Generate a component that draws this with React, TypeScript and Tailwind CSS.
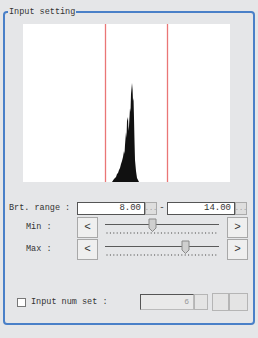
const mono = { fontFamily: '"Liberation Mono", "DejaVu Sans Mono", monospace' };

function Histogram() {
  return (
    <svg className="ml-[18px] mt-[6px] block" width="207" height="158" viewBox="23 24 207 158">
      <rect x="23" y="24" width="207" height="158" fill="#ffffff" />
      <path
        d="M112 182 L114 179 L116 177 L117 174 L118 173 L119 170 L120 168 L121 164 L122 161 L123 157 L124 151 L124.5 154 L125 145 L126 132 L126.5 138 L127 121 L128 117 L128.5 131 L129 126 L130 108 L130.5 112 L131 94 L132 83 L132.6 90 L133 101 L133.5 98 L134 118 L134.5 141 L135 160 L136 171 L137 178 L138 180 L139 182 Z"
        fill="#111111"
      />
      <line x1="105.5" y1="24" x2="105.5" y2="182" stroke="#ea7676" strokeWidth="1.3" />
      <line x1="167.5" y1="24" x2="167.5" y2="182" stroke="#ea7676" strokeWidth="1.3" />
    </svg>
  );
}

function Slider({ pos }: { pos: number }) {
  const ticks = [];
  for (let x = 2; x < 114; x += 3.4) ticks.push(x);
  return (
    <svg width="114" height="21" viewBox="0 0 114 21" className="block">
      <line x1="0" y1="7.5" x2="114" y2="7.5" stroke="#5a5a5a" strokeWidth="1" />
      {ticks.map((x, i) => (
        <line key={i} x1={x} y1="15" x2={x} y2="17" stroke="#7a7a7a" strokeWidth="0.8" />
      ))}
      <path
        d={`M${pos} 2 h7 v9 l-3.5 3.5 l-3.5 -3.5 Z`}
        fill="#cfcfcf"
        stroke="#8a8a8a"
        strokeWidth="1"
      />
    </svg>
  );
}

function ArrowButton({ children }: { children: string }) {
  return (
    <div className="w-[21px] h-[21px] flex items-center justify-center bg-[#efefef] border border-[#a8a8a8] text-[11px] text-[#333]">
      {children}
    </div>
  );
}

function NumberBox({ value }: { value: string }) {
  return (
    <div className="flex h-[13px]">
      <div className="w-[68px] h-full bg-white border border-[#555] flex items-center justify-end pr-[3px] text-[9px] text-[#333] leading-none">
        {value}
      </div>
      <div className="w-[12px] h-full bg-[#dedede] border border-[#aaa] flex items-center justify-center text-[7px] text-[#999] leading-none">
        ...
      </div>
    </div>
  );
}

function SliderRow({ label, pos }: { label: string; pos: number }) {
  return (
    <div className="flex items-center h-[21px]">
      <span className="w-[72px] pl-[21px] text-[8.5px] text-[#333]">{label}</span>
      <ArrowButton>{"<"}</ArrowButton>
      <div className="ml-[7px] w-[114px]">
        <Slider pos={pos} />
      </div>
      <div className="ml-[8px]">
        <ArrowButton>{">"}</ArrowButton>
      </div>
    </div>
  );
}

export default function App() {
  return (
    <div className="w-[258px] h-[338px] bg-[#e5e6e8] pt-[6px] px-[3px]" style={mono}>
      <fieldset className="h-[319px] border-2 border-[#4a80c8] rounded-[4px]">
        <legend className="ml-[3px] px-[1px] text-[8.5px] leading-[12px] text-[#333]">Input setting</legend>
        <Histogram />

        <div className="mt-[20px] flex items-center h-[13px] pl-[4px]">
          <span className="w-[68px] text-[8.5px] text-[#333]">Brt. range :</span>
          <NumberBox value="8.00" />
          <span className="w-[10px] text-center text-[9px] text-[#333]">-</span>
          <NumberBox value="14.00" />
        </div>

        <div className="mt-[2px] flex flex-col gap-[1px]">
          <SliderRow label="Min :" pos={44} />
          <SliderRow label="Max :" pos={77} />
        </div>

        <div className="mt-[34px] flex items-center h-[16px] pl-[12px]">
          <div className="w-[9px] h-[9px] bg-white border border-[#777]" />
          <span className="ml-[5px] w-[109px] text-[8.5px] text-[#333]">Input num set :</span>
          <div className="w-[54px] h-full bg-[#e9e9e9] border border-t-[#555] border-l-[#555] border-r-[#bbb] border-b-[#bbb] flex items-center justify-end pr-[4px] text-[8px] text-[#999]">
            6
          </div>
          <div className="w-[14px] h-full bg-[#e4e4e4] border border-[#b5b5b5]" />
          <div className="ml-[4px] w-[17px] h-[18px] bg-[#e4e4e4] border border-[#b5b5b5]" />
          <div className="w-[19px] h-[18px] bg-[#e4e4e4] border border-[#b5b5b5]" />
        </div>
      </fieldset>
    </div>
  );
}
